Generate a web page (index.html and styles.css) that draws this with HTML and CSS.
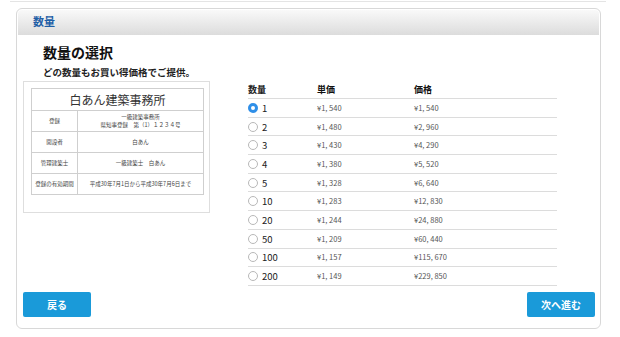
FILE: index.html
```html
<!DOCTYPE html>
<html lang="ja">

<head>
    <meta charset="UTF-8">
    <title>数量の選択</title>
    <link rel="stylesheet" href="styles.css">
</head>

<body>
    <div class="topline"></div>

    <div class="panel">
        <div class="panel-head">数量</div>

        <div class="panel-body">
            <h1 class="title">数量の選択</h1>
            <p class="lead">どの数量もお買い得価格でご提供。</p>

            <div class="main">
                <!-- 見本カード -->
                <div class="sample">
                    <table class="plate">
                        <tr>
                            <td class="plate-name" colspan="2">白あん建築事務所</td>
                        </tr>
                        <tr>
                            <th>登録</th>
                            <td>一級建築事務所<br>県知事登録　第（1）１２３４号</td>
                        </tr>
                        <tr>
                            <th>開設者</th>
                            <td>白あん</td>
                        </tr>
                        <tr>
                            <th>管理建築士</th>
                            <td>一級建築士　白あん</td>
                        </tr>
                        <tr>
                            <th>登録の有効期間</th>
                            <td>平成30年7月1日から平成30年7月6日まで</td>
                        </tr>
                    </table>
                </div>

                <!-- 価格表 -->
                <div class="prices">
                    <div class="row head">
                        <div class="c-qty">数量</div>
                        <div class="c-unit">単価</div>
                        <div class="c-total">価格</div>
                    </div>
                    <div class="row">
                        <div class="c-qty"><span class="radio checked"></span>1</div>
                        <div class="c-unit">¥1, 540</div>
                        <div class="c-total">¥1, 540</div>
                    </div>
                    <div class="row">
                        <div class="c-qty"><span class="radio"></span>2</div>
                        <div class="c-unit">¥1, 480</div>
                        <div class="c-total">¥2, 960</div>
                    </div>
                    <div class="row">
                        <div class="c-qty"><span class="radio"></span>3</div>
                        <div class="c-unit">¥1, 430</div>
                        <div class="c-total">¥4, 290</div>
                    </div>
                    <div class="row">
                        <div class="c-qty"><span class="radio"></span>4</div>
                        <div class="c-unit">¥1, 380</div>
                        <div class="c-total">¥5, 520</div>
                    </div>
                    <div class="row">
                        <div class="c-qty"><span class="radio"></span>5</div>
                        <div class="c-unit">¥1, 328</div>
                        <div class="c-total">¥6, 640</div>
                    </div>
                    <div class="row">
                        <div class="c-qty"><span class="radio"></span>10</div>
                        <div class="c-unit">¥1, 283</div>
                        <div class="c-total">¥12, 830</div>
                    </div>
                    <div class="row">
                        <div class="c-qty"><span class="radio"></span>20</div>
                        <div class="c-unit">¥1, 244</div>
                        <div class="c-total">¥24, 880</div>
                    </div>
                    <div class="row">
                        <div class="c-qty"><span class="radio"></span>50</div>
                        <div class="c-unit">¥1, 209</div>
                        <div class="c-total">¥60, 440</div>
                    </div>
                    <div class="row">
                        <div class="c-qty"><span class="radio"></span>100</div>
                        <div class="c-unit">¥1, 157</div>
                        <div class="c-total">¥115, 670</div>
                    </div>
                    <div class="row">
                        <div class="c-qty"><span class="radio"></span>200</div>
                        <div class="c-unit">¥1, 149</div>
                        <div class="c-total">¥229, 850</div>
                    </div>
                </div>
            </div>

            <div class="actions">
                <a class="btn" href="#">戻る</a>
                <a class="btn" href="#">次へ進む</a>
            </div>
        </div>
    </div>
</body>

</html>
```

FILE: styles.css
```css
* {
    padding: 0;
    margin: 0;
    box-sizing: border-box;
}

body {
    background-color: #fff;
    font-family: "Noto Sans CJK JP", "Noto Sans", sans-serif;
    color: #222;
    padding-top: 1px;
}

.topline {
    height: 1px;
    margin: 0 14px 0 10px;
    background-color: #e4e4e4;
}

.panel {
    width: 585px;
    height: 321px;
    margin: 6px 0 0 16px;
    border: 1px solid #d8d8d8;
    border-radius: 6px;
    padding: 1px;
}

.panel-head {
    height: 25px;
    line-height: 23px;
    padding-left: 15px;
    border-radius: 4px 4px 0 0;
    background: linear-gradient(#f9f9f9, #dcdcdc);
    color: #1f5fa6;
    font-size: 11px;
    font-weight: bold;
}

.panel-body {
    padding: 7px 4px 0 5px;
}

.title {
    font-size: 14px;
    line-height: 20px;
    margin-left: 20px;
    color: #111;
}

.lead {
    font-size: 9.5px;
    font-weight: bold;
    line-height: 16px;
    margin: 2px 0 1px 20px;
    color: #222;
}

.main {
    display: flex;
    align-items: flex-start;
}

/* 見本 */
.sample {
    width: 187px;
    height: 132px;
    border: 1px solid #dedede;
    padding: 6px 0 0 7px;
}

.plate {
    width: 173px;
    border-collapse: collapse;
    font-size: 5.5px;
    color: #444;
}

.plate th,
.plate td {
    border: 1px solid #cfcfcf;
    height: 21px;
    text-align: center;
    font-weight: normal;
    line-height: 8px;
}

.plate th {
    width: 46px;
}

.plate .plate-name {
    height: 22px;
    font-size: 12px;
    line-height: 16px;
    color: #333;
}

/* 価格表 */
.prices {
    width: 309px;
    margin-left: 38px;
}

.row {
    display: flex;
    align-items: center;
    height: 18.7px;
    border-bottom: 1px solid #dcdcdc;
    font-size: 7.5px;
    line-height: 10px;
    color: #555;
}

.row.head {
    height: 18px;
    font-size: 9px;
    font-weight: bold;
    color: #111;
}

.c-qty {
    width: 69px;
    display: flex;
    align-items: center;
    font-size: 9.5px;
    color: #222;
}

.head .c-qty {
    font-size: 9px;
}

.c-unit {
    width: 97px;
}

.radio {
    width: 10px;
    height: 10px;
    border: 1px solid #b8b8b8;
    border-radius: 50%;
    margin-right: 4px;
    background-color: #fff;
}

.radio.checked {
    border: 3px solid #2f8fe8;
    background-color: #fff;
}

.actions {
    display: flex;
    justify-content: space-between;
    margin-top: 6px;
}

.btn {
    display: block;
    width: 68px;
    height: 25px;
    line-height: 25px;
    text-align: center;
    background-color: #1a9ad9;
    border-radius: 2px;
    color: #fff;
    font-size: 10px;
    font-weight: bold;
    text-decoration: none;
}
```
